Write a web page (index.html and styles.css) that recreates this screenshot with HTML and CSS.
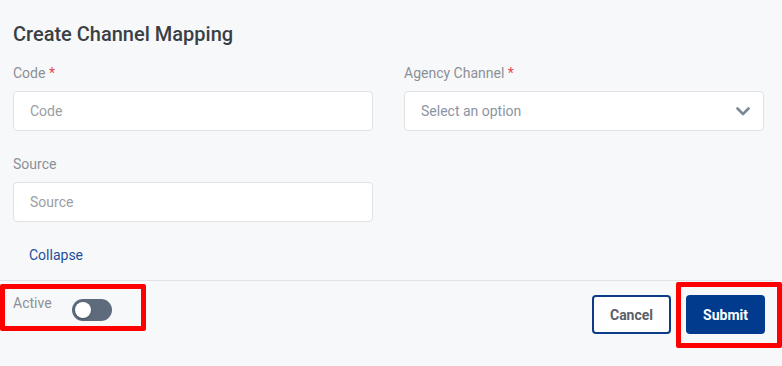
FILE: index.html
```html
<!DOCTYPE html>
<html lang="en">
<head>
    <meta charset="UTF-8">
    <meta name="viewport" content="width=device-width, initial-scale=1.0">
    <title>Create Channel Mapping</title>
    <link rel="stylesheet" href="styles.css">
</head>
<body>
    <div class="page">
        <h1 class="title">Create Channel Mapping</h1>

        <div class="form-grid">
            <div class="field">
                <label class="label">Code <span class="req">*</span></label>
                <div class="input">Code</div>
            </div>
            <div class="field">
                <label class="label">Agency Channel <span class="req">*</span></label>
                <div class="input select">
                    <span>Select an option</span>
                    <svg class="chevron" width="14" height="9" viewBox="0 0 14 9">
                        <polyline points="1.5,1.5 7,7 12.5,1.5" fill="none" stroke="#7c8797" stroke-width="2.6" stroke-linecap="round" stroke-linejoin="round"/>
                    </svg>
                </div>
            </div>
            <div class="field">
                <label class="label">Source</label>
                <div class="input">Source</div>
            </div>
        </div>

        <a class="collapse" href="#">Collapse</a>

        <div class="footer">
            <div class="active-group">
                <span class="active-label">Active</span>
                <span class="toggle"><span class="knob"></span></span>
            </div>
            <div class="actions">
                <button class="btn btn-cancel">Cancel</button>
                <button class="btn btn-submit">Submit</button>
            </div>

            <!-- highlight marks -->
            <div class="mark mark-active"></div>
            <div class="mark mark-submit"></div>
        </div>
    </div>
</body>
</html>
```

FILE: styles.css
```css
body {
    margin: 0;
    background-color: #f7f8fa;
    font-family: Roboto, "Liberation Sans", Arial, sans-serif;
    color: #333a40;
}

.page {
    width: 782px;
    height: 366px;
    overflow: hidden;
}

.title {
    margin: 0;
    padding: 22px 0 0 13px;
    font-size: 20px;
    line-height: 24px;
    font-weight: 500;
    color: #3a3f44;
}

.form-grid {
    display: grid;
    grid-template-columns: 360px 360px;
    column-gap: 31px;
    row-gap: 23px;
    padding: 17px 0 0 13px;
}

.field {
    display: flex;
    flex-direction: column;
}

.label {
    font-size: 14px;
    line-height: 20px;
    color: #8b9096;
    margin-bottom: 8px;
}

.req {
    color: #e5484d;
}

.input {
    box-sizing: border-box;
    height: 40px;
    border: 1px solid #dfe1e5;
    border-radius: 4px;
    background-color: #ffffff;
    padding: 0 16px;
    display: flex;
    align-items: center;
    font-size: 14px;
    color: #9a9ea3;
}

.select {
    justify-content: space-between;
    color: #8b94a3;
    padding-right: 13px;
}

.chevron {
    display: block;
}

.collapse {
    display: block;
    margin: 23px 0 0 29px;
    width: max-content;
    font-size: 14px;
    line-height: 20px;
    color: #1d4f9c;
    text-decoration: none;
}

.footer {
    position: relative;
    margin-top: 15px;
    margin-right: 8px;
    border-top: 1px solid #e1e3e6;
    padding: 14px 9px 0 13px;
    display: flex;
    justify-content: space-between;
    align-items: flex-start;
}

.active-group {
    display: flex;
    align-items: flex-start;
}

.active-label {
    font-size: 14px;
    line-height: 20px;
    margin-top: -2px;
    color: #8b9096;
}

.toggle {
    position: relative;
    width: 40px;
    height: 22px;
    margin: 4px 0 0 20px;
    border-radius: 11px;
    background-color: #5d6b7c;
}

.knob {
    position: absolute;
    left: 3px;
    top: 3px;
    width: 16px;
    height: 16px;
    border-radius: 50%;
    background-color: #ffffff;
    box-shadow: 0 1px 2px rgba(0, 0, 0, 0.25);
}

.actions {
    display: flex;
    gap: 15px;
}

.btn {
    box-sizing: border-box;
    width: 79px;
    height: 39px;
    border-radius: 4px;
    font-family: inherit;
    font-size: 14px;
    font-weight: 700;
    cursor: pointer;
}

.btn-cancel {
    border: 2px solid #0d3b87;
    background-color: #ffffff;
    color: #5a6068;
}

.btn-submit {
    border: none;
    background-color: #003b8e;
    color: #ffffff;
}

.mark {
    position: absolute;
    box-sizing: border-box;
    border: 5px solid #ff0000;
    border-radius: 2px;
}

.mark-active {
    left: 0;
    top: 3px;
    width: 146px;
    height: 47px;
}

.mark-submit {
    left: 676px;
    top: 1px;
    width: 106px;
    height: 66px;
}
```
